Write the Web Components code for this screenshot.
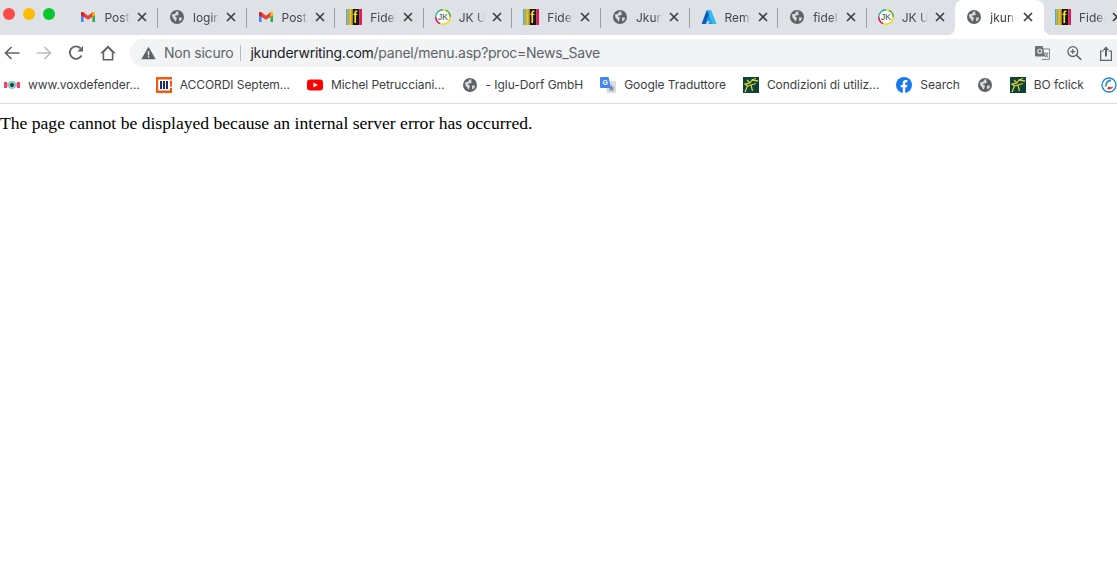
<!DOCTYPE html>
<html lang="it"><head><meta charset="utf-8"><title>jkunderwriting.com</title>
<style>
html,body{margin:0;padding:0;background:#fff;overflow:hidden;height:100%}
</style></head><body>
<browser-window>
<tab-strip>
<chrome-tab icon="gmail">Posta</chrome-tab>
<chrome-tab icon="globe">login</chrome-tab>
<chrome-tab icon="gmail">Posta</chrome-tab>
<chrome-tab icon="fidel">Fidelity</chrome-tab>
<chrome-tab icon="jk">JK Underwriting</chrome-tab>
<chrome-tab icon="fidel">Fidelity</chrome-tab>
<chrome-tab icon="globe">Jkunder</chrome-tab>
<chrome-tab icon="azure">Remote</chrome-tab>
<chrome-tab icon="globe">fidelity</chrome-tab>
<chrome-tab icon="jk">JK Underwriting</chrome-tab>
<chrome-tab icon="globe" active>jkunderwriting</chrome-tab>
<chrome-tab icon="fidel">Fidelity</chrome-tab>
</tab-strip>
<tool-bar></tool-bar>
<bookmark-bar>
<book-mark icon="vox" style="margin-right:-1px">www.voxdefender...</book-mark>
<book-mark icon="accordi">ACCORDI Septem...</book-mark>
<book-mark icon="youtube">Michel Petrucciani...</book-mark>
<book-mark icon="globe">- Iglu-Dorf GmbH</book-mark>
<book-mark icon="gtrans">Google Traduttore</book-mark>
<book-mark icon="bo">Condizioni di utiliz...</book-mark>
<book-mark icon="fb">Search</book-mark>
<book-mark icon="globe"></book-mark>
<book-mark icon="bo">BO fclick</book-mark>
<book-mark icon="swirl"></book-mark>
</bookmark-bar>
<error-page>The page cannot be displayed because an internal server error has occurred.</error-page>
</browser-window>
<script>
const ICONS={
gmail:`<svg viewBox="0 0 16 16" width="16" height="16"><path d="M1 13V4.400L3.600 5V13Z" fill="#4285f4"/><path d="M12.400 13V5L15 4.400V13Z" fill="#34a853"/><path d="M1.200 4 3 2.800 8 6.800 13 2.800 14.800 4 12.400 8 8 10.800 3.600 8Z" fill="#ea4335"/><path d="M12.400 4.100 13.400 3.100C14.300 2.500 15 3.300 15 4.300V6.200L12.400 8Z" fill="#fbbc04"/><path d="M1 4.300C1 3.300 1.800 2.500 2.600 3.100L3.600 4.100V8L1 6.200Z" fill="#c5221f"/></svg>`,
globe:`<svg viewBox="0 0 16 16" width="16" height="16"><circle cx="8" cy="8" r="7" fill="#5f6368"/><path d="M3 5.200 5.600 5 7.600 2.400 9.600 2.600 9 4.200 10.200 5 8.400 6.600 6.800 6.200 6 7.400 7.800 8.600 7.600 10.400 6.400 12.800 5.200 10.400 3.400 8.200Z" fill="#d9dbde"/><path d="M10.200 8.600 13 8.600 12.400 11 10.600 12.600 10 10.600Z" fill="#d9dbde"/></svg>`,
fidel:`<svg viewBox="0 0 16 16" width="16" height="16"><rect width="1.200" height="16" fill="#3fa9f5"/><rect x="1.200" width="1.200" height="16" fill="#f7931e"/><rect x="2.400" width="1.200" height="16" fill="#39b54a"/><rect x="3.600" width="1.200" height="16" fill="#f2c200"/><rect x="4.800" width="1.200" height="16" fill="#f7931e"/><rect x="6" width="7.400" height="16" fill="#15140f"/><rect x="6" width="1" height="16" fill="#7a9a20"/><rect x="13.400" width="2.600" height="16" fill="#e8175d"/><path d="M8.400 14V6H7.400V4.700h1V3.600C8.400 2 9.400 1.400 11.400 1.600V3c-1 0-1.300.1-1.300.8v.9h1.300V6H10.100v8Z" fill="#f4e21a"/></svg>`,
jk:`<svg viewBox="0 0 16 16" width="16" height="16"><g fill="none" stroke-width="1.500"><circle cx="8" cy="8" r="7.200" stroke="#f5d800"/><path d="M8 .8A7.200 7.200 0 0 0 .8 8" stroke="#22b5c9"/><path d="M.8 8A7.200 7.200 0 0 0 5 14.600" stroke="#e6007e"/><path d="M15.200 8A7.200 7.200 0 0 0 11 1.400" stroke="#39b54a"/></g><circle cx="8" cy="8" r="6.300" fill="#fff"/><text x="8" y="11" font-size="8.500" text-anchor="middle" font-family="Liberation Sans" fill="#444">JK</text></svg>`,
azure:`<svg viewBox="0 0 16 16" width="16" height="16"><path d="M5.600 1.400H10L5 15H.6Z" fill="#0a5cb8"/><path d="M10 1.400 15.400 15H6.600L9.600 12.600H5Z" fill="#1c9be6"/><path d="M6.400 1.400H10L15.400 15H11.600Z" fill="#35bdf2"/></svg>`,
vox:`<svg viewBox="0 0 16 16" width="16" height="16"><rect y="5" width="3" height="6" fill="#e8476a"/><rect x="13" y="5" width="3" height="6" fill="#e8476a"/><rect x="3" y="6" width="2" height="4" fill="#f5a3b5"/><rect x="11" y="6" width="2" height="4" fill="#f5a3b5"/><circle cx="8" cy="8" r="4" fill="#7fc9cc"/><circle cx="8" cy="8" r="2" fill="#333"/></svg>`,
accordi:`<svg viewBox="0 0 16 16" width="16" height="16"><path d="M0 0H16V2.400H2.200V13.600H14V11H16V16H0Z" fill="#ee5a10"/><rect x="14" y="3.600" width="2" height="6" fill="#ee5a10"/><rect x="4" y="4" width="2" height="8" fill="#1d2f6f"/><rect x="7" y="4" width="2" height="8" fill="#1d2f6f"/><rect x="10" y="4" width="2" height="8" fill="#1d2f6f"/></svg>`,
youtube:`<svg viewBox="0 0 16 16" width="16" height="16"><rect y="2.400" width="16" height="11.200" rx="3" fill="#f00"/><path d="M6.400 5.400 10.800 8 6.400 10.600Z" fill="#fff"/></svg>`,
gtrans:`<svg viewBox="0 0 16 16" width="16" height="16"><path d="M5 4H15a1 1 0 0 1 1 1V15a1 1 0 0 1-1 1H7Z" fill="#dadce0"/><path d="M11.500 7.500 12.600 10.400 15 10.400 13 12 13.800 14.400 11.500 13 9.400 14.400 10 12 8.200 10.400 10.500 10.400Z" fill="#7d8b99"/><path d="M1 0H8.500L11 11H1A1 1 0 0 1 0 10V1A1 1 0 0 1 1 0Z" fill="#4285f4"/><text x="5.200" y="8" font-size="7" font-weight="700" text-anchor="middle" font-family="Liberation Sans" fill="#fff">G</text></svg>`,
bo:`<svg viewBox="0 0 16 16" width="16" height="16"><rect width="16" height="16" fill="#0e4238"/><path d="M2 15 4.500 9 2 7 7 6 9 3 13 1.500M4.500 9 8 8 9.500 14M9 3 15 4M8 8 13 6.500M4 3 7 6" stroke="#d7d23a" stroke-width="1.300" fill="none"/></svg>`,
fb:`<svg viewBox="0 0 16 16" width="16" height="16"><circle cx="8" cy="8" r="8" fill="#1877f2"/><path d="M6.800 16V10.300H4.800V8H6.800V6.200C6.800 4.200 8 3.100 9.800 3.100L11.400 3.300V5.200H10.400C9.500 5.200 9.200 5.700 9.200 6.300V8H11.300L11 10.300H9.200V16Z" fill="#fff"/></svg>`,
swirl:`<svg viewBox="0 0 16 16" width="16" height="16"><circle cx="8" cy="8" r="7" fill="#fff" stroke="#1e88d2" stroke-width="1.300"/><path d="M10 3.400C6.500 3.600 4.600 6 5 9.600" stroke="#1e88d2" stroke-width="1.600" fill="none"/><path d="M6 11.400C8 13 11.600 12.400 12 9 11 10.400 9 10.600 8 9.400Z" fill="#e0262b"/></svg>`
};
const FONT=`"Inter","Liberation Sans",sans-serif`;
function def(name,css,html,init){
  customElements.define(name,class extends HTMLElement{
    constructor(){super();this.attachShadow({mode:'open'}).innerHTML=`<style>${css}</style>${html}`;}
    connectedCallback(){init&&init(this,this.shadowRoot);}
  });
}
def('browser-window',`:host{display:flex;flex-direction:column;width:100%;height:100vh;overflow:hidden;background:#fff}`,`<slot></slot>`);
def('traffic-lights',`:host{display:flex;gap:8px;padding:8px 0 0 3px;flex:none;width:69.4px;box-sizing:border-box;align-self:flex-start}
i{width:12px;height:12px;border-radius:50%;display:block}`,
`<i style="background:#ff4b47"></i><i style="background:#ffbb00"></i><i style="background:#09c72e"></i>`);
def('tab-strip',`:host{display:flex;height:35px;background:#dee1e6;flex:none;overflow:hidden;box-sizing:border-box;font-family:${FONT}}
.tabs{display:flex;flex:none}`,`<traffic-lights></traffic-lights><div class="tabs"><slot></slot></div>`);
def('chrome-tab',`:host{display:flex;align-items:center;flex:none;width:88.6px;height:35px;box-sizing:border-box;padding:0 0 1px 11px;position:relative;font-size:12px;color:#45474d}
:host([active]){background:#fff;border-radius:8px 8px 0 0;color:#3c4043;z-index:1}
.ic{width:16px;height:16px;flex:none;display:block;margin-right:8px}
.t{width:26px;overflow:hidden;white-space:nowrap;flex:none;-webkit-mask-image:linear-gradient(90deg,#000 70%,transparent);mask-image:linear-gradient(90deg,#000 70%,transparent)}
.x{width:10px;height:10px;margin-left:7px;flex:none;display:block}
.sep{position:absolute;right:0;top:8px;height:20px;width:1px;background:#9b9ea3}
:host([active]) .sep,:host([nosep]) .sep{display:none}
.c{position:absolute;bottom:0;width:8px;height:8px;display:none}
:host([active]) .c{display:block}
.l{left:-8px;background:radial-gradient(circle at 0 0,transparent 8px,#fff 8.500px)}
.r{right:-8px;background:radial-gradient(circle at 100% 0,transparent 8px,#fff 8.500px)}`,
`<span class="ic"></span><span class="t"><slot></slot></span><svg class="x" viewBox="0 0 10 10"><path d="M1 1 9 9M9 1 1 9" stroke="#3c4043" stroke-width="1.700"/></svg><span class="sep"></span><span class="c l"></span><span class="c r"></span>`,
(el,sr)=>{sr.querySelector('.ic').innerHTML=ICONS[el.getAttribute('icon')]||'';
 const n=el.nextElementSibling; if(!n||n.hasAttribute('active'))el.setAttribute('nosep','');});
def('icon-btn',`:host{display:flex;width:32px;height:32px;flex:none;align-items:center;justify-content:center}`,`<slot></slot>`);
def('omni-box',`:host{display:flex;align-items:center;flex:1;height:28px;background:#f1f3f4;border-radius:14px 0 0 14px;min-width:0;padding-left:11px;font-family:${FONT};font-size:14px;letter-spacing:-.22px;white-space:nowrap}
.warn{flex:none;margin-right:8px;display:block}
.ns{color:#5f6368;margin-bottom:2px}
.bar{width:1px;height:16px;background:#b6b9bd;margin:0 9px 0 7px;flex:none}
.h{color:#202124;margin-bottom:2px;letter-spacing:-.25px}.p{color:#5f6368;margin-bottom:2px;letter-spacing:-.25px}
.end{margin-left:auto;display:flex;gap:16px;padding-right:3px}
.end span{display:flex;width:16px;height:28px;align-items:center;justify-content:center}`,
`<svg class="warn" width="15" height="14" viewBox="0 0 15 14"><path d="M7.500 .8 14.700 13.300H.3Z" fill="#5f6368"/><rect x="6.800" y="5" width="1.400" height="4.400" fill="#f1f3f4"/><rect x="6.800" y="10.200" width="1.400" height="1.500" fill="#f1f3f4"/></svg>
<span class="ns">Non sicuro</span><span class="bar"></span><span class="h">jkunderwriting.com</span><span class="p">/panel/menu.asp?proc=News_Save</span>
<span class="end">
<span><svg width="15" height="14" viewBox="0 0 15 14"><path d="M7 3H14.400V13.400H6.500" fill="#fff" stroke="#7b7f84" stroke-width="1"/><path d="M.8 0H7.600L10.400 10.400H.8A.8.8 0 0 1 0 9.600V.8A.8.8 0 0 1 .8 0Z" fill="#6e7276"/><circle cx="4.800" cy="5.200" r="2" fill="none" stroke="#e8eaed" stroke-width="1.100"/><path d="M10.200 6.500 13 11.500M13 6.500 10.200 11.500" stroke="#7b7f84" stroke-width="1.100"/></svg></span>
<span><svg width="15" height="14" viewBox="0 0 15 14"><circle cx="5.800" cy="5.600" r="4.900" fill="none" stroke="#5f6368" stroke-width="1.300"/><path d="M9.500 9.200 14.200 13.800" stroke="#5f6368" stroke-width="1.700"/><path d="M3.300 5.600H8.300M5.800 3.100V8.100" stroke="#5f6368" stroke-width="1.200"/></svg></span>
<span><svg width="12" height="15" viewBox="0 0 12 15"><path d="M3.700 5H.6V14.400H11.400V5H8.300" fill="none" stroke="#5f6368" stroke-width="1.200"/><path d="M6 10.500V1.500" stroke="#5f6368" stroke-width="2"/><path d="M2.800 4 6 .6 9.200 4Z" fill="#5f6368"/></svg></span>
</span>`);
def('tool-bar',`:host{display:flex;align-items:center;height:33px;flex:none;background:#fff;box-sizing:border-box;padding:4px 0 1px 0}
.b{display:flex;gap:0;flex:none;margin-left:-4px;margin-right:6px}`,
`<div class="b">
<icon-btn><svg width="16" height="14" viewBox="0 0 16 14"><path d="M15.500 7H2M7.500 1 1.500 7 7.500 13" fill="none" stroke="#5f6368" stroke-width="1.600"/></svg></icon-btn>
<icon-btn><svg width="16" height="14" viewBox="0 0 16 14"><path d="M.5 7H14M8.500 1 14.500 7 8.500 13" fill="none" stroke="#b9bcc0" stroke-width="1.600"/></svg></icon-btn>
<icon-btn><svg width="16" height="16" viewBox="0 0 16 16"><path d="M13.500 10.500A6.200 6.200 0 1 1 12.500 3.300" fill="none" stroke="#5f6368" stroke-width="1.800"/><path d="M15 1V6.600H9.400Z" fill="#5f6368"/></svg></icon-btn>
<icon-btn><svg width="16" height="16" viewBox="0 0 16 16"><path d="M8 .6 .2 8.200H2.600V15.600H13.400V8.200H15.800ZM4.200 14V7.300L8 3.300 11.800 7.300V14Z" fill="#5f6368" fill-rule="evenodd"/></svg></icon-btn>
</div><omni-box></omni-box>`);
def('bookmark-bar',`:host{display:flex;align-items:center;height:36px;flex:none;background:#fff;border-bottom:1px solid #dcdcdc;box-sizing:border-box;padding:0 0 1px 4px;gap:17px;overflow:hidden;white-space:nowrap;font-family:${FONT};font-size:12px;color:#3c4043}`,`<slot></slot>`);
def('book-mark',`:host{display:flex;align-items:center;flex:none;gap:8px;letter-spacing:-.06px}
.ic{width:16px;height:16px;display:block;flex:none}
.l{margin-bottom:2px}
:host([empty]){gap:0}`,`<span class="ic"></span><span class="l"><slot></slot></span>`,
(el,sr)=>{sr.querySelector('.ic').innerHTML=ICONS[el.getAttribute('icon')]||'';if(!el.textContent)el.setAttribute('empty','');});
def('error-page',`:host{display:block;flex:1;font-family:"Liberation Serif",serif;font-size:17.6px;color:#000;padding-top:9px;line-height:21px}`,`<slot></slot>`);
</script>
</body></html>
